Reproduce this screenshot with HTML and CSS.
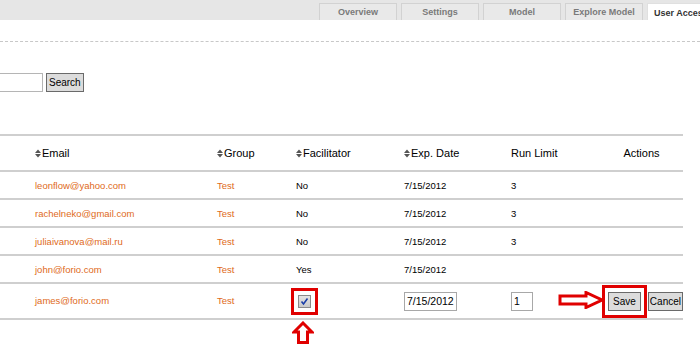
FILE: index.html
```html
<!DOCTYPE html>
<html lang="en">
<head>
    <meta charset="UTF-8">
    <title>User Access</title>
    <link rel="stylesheet" href="styles.css">
</head>
<body>
    <div class="topbar">
        <ul class="tabs">
            <li>Overview</li>
            <li>Settings</li>
            <li>Model</li>
            <li>Explore Model</li>
            <li class="active">User Access</li>
        </ul>
    </div>
    <div class="subhead"></div>

    <div class="search">
        <input type="text" class="search-input">
        <button class="btn">Search</button>
    </div>

    <table class="users">
        <colgroup>
            <col class="c-name">
            <col class="c-email">
            <col class="c-group">
            <col class="c-fac">
            <col class="c-date">
            <col class="c-limit">
            <col class="c-actions">
        </colgroup>
        <tr>
            <th></th>
            <th><svg class="sort" width="6" height="9" viewBox="0 0 6 9"><polygon points="0,4 3,0.5 6,4"/><polygon points="0,5 3,8.5 6,5"/></svg>Email</th>
            <th><svg class="sort" width="6" height="9" viewBox="0 0 6 9"><polygon points="0,4 3,0.5 6,4"/><polygon points="0,5 3,8.5 6,5"/></svg>Group</th>
            <th><svg class="sort" width="6" height="9" viewBox="0 0 6 9"><polygon points="0,4 3,0.5 6,4"/><polygon points="0,5 3,8.5 6,5"/></svg>Facilitator</th>
            <th><svg class="sort" width="6" height="9" viewBox="0 0 6 9"><polygon points="0,4 3,0.5 6,4"/><polygon points="0,5 3,8.5 6,5"/></svg>Exp. Date</th>
            <th>Run Limit</th>
            <th class="actions-head">Actions</th>
        </tr>
        <tr>
            <td></td>
            <td class="link">leonflow@yahoo.com</td>
            <td class="link">Test</td>
            <td>No</td>
            <td>7/15/2012</td>
            <td>3</td>
            <td></td>
        </tr>
        <tr>
            <td></td>
            <td class="link">rachelneko@gmail.com</td>
            <td class="link">Test</td>
            <td>No</td>
            <td>7/15/2012</td>
            <td>3</td>
            <td></td>
        </tr>
        <tr>
            <td></td>
            <td class="link">juliaivanova@mail.ru</td>
            <td class="link">Test</td>
            <td>No</td>
            <td>7/15/2012</td>
            <td>3</td>
            <td></td>
        </tr>
        <tr>
            <td></td>
            <td class="link">john@forio.com</td>
            <td class="link">Test</td>
            <td>Yes</td>
            <td>7/15/2012</td>
            <td></td>
            <td></td>
        </tr>
        <tr class="editing">
            <td></td>
            <td class="link">james@forio.com</td>
            <td class="link">Test</td>
            <td>
                <span class="marked check-mark">
                    <span class="checkbox"><svg width="9" height="9" viewBox="0 0 9 9"><path d="M1.5 4.5 L3.5 7 L7.5 1.5" fill="none" stroke="#1b3fa8" stroke-width="1.6"/></svg></span>
                </span>
            </td>
            <td><input type="text" class="field date-field" value="7/15/2012"></td>
            <td><input type="text" class="field limit-field" value="1"></td>
            <td class="actions">
                <span class="save-wrap">
                    <svg class="arrow-right" width="46" height="18" viewBox="0 0 46 18"><polygon points="2,5 28,5 28,1.5 44,9 28,16.5 28,13 2,13" fill="#fff" stroke="#e00000" stroke-width="3" stroke-linejoin="miter"/></svg>
                    <span class="marked save-mark"><button class="btn">Save</button></span>
                </span><button class="btn btn-cancel">Cancel</button>
            </td>
        </tr>
    </table>

    <div class="annot-up">
        <svg width="22" height="23" viewBox="0 0 22 23"><polygon points="11,2 20,11 15.5,11 15.5,21.5 6.5,21.5 6.5,11 2,11" fill="#fff" stroke="#e00000" stroke-width="3" stroke-linejoin="miter"/></svg>
    </div>
</body>
</html>
```

FILE: styles.css
```css
body {
    margin: 0;
    font-family: "Liberation Sans", Arial, sans-serif;
    background: #fff;
    color: #000;
    overflow: hidden;
}
.topbar {
    height: 20px;
    background-color: #e6e6e6;
    overflow: hidden;
}
.tabs {
    list-style: none;
    margin: 0;
    padding: 3px 0 0 319px;
    display: flex;
    gap: 4px;
}
.tabs li {
    flex-shrink: 0;
    width: 78px;
    height: 17px;
    line-height: 16px;
    text-align: center;
    font-size: 9px;
    font-weight: bold;
    color: #7a7a7a;
    background-color: #e9e9e9;
    border: 1px solid #d2d2d2;
    border-bottom: none;
    box-sizing: border-box;
}
.tabs li.active {
    width: 80px;
    background-color: #fff;
    color: #333;
    border-color: #e0e0e0;
    line-height: 18px;
    text-align: left;
    padding-left: 6px;
    white-space: nowrap;
}
.subhead {
    height: 21px;
    border-bottom: 1px dashed #c8c8c8;
}
.search {
    display: flex;
    align-items: center;
    gap: 3px;
    margin: 31px 0 0 -60px;
}
.search-input {
    width: 103px;
    height: 19px;
    box-sizing: border-box;
    border: 1px solid #b5b5b5;
    padding: 0;
}
.btn {
    font-family: "Liberation Sans", Arial, sans-serif;
    font-size: 10px;
    color: #000;
    background-color: #dcdcdc;
    border: 1px solid #6a6a6a;
    height: 19px;
    padding: 0 2px;
    margin: 0;
    border-radius: 0;
}
.users {
    margin-top: 42px;
    width: 683px;
    table-layout: fixed;
    border-collapse: collapse;
    font-size: 9.5px;
}
.c-name { width: 35px; }
.c-email { width: 182px; }
.c-group { width: 79px; }
.c-fac { width: 108px; }
.c-date { width: 107px; }
.c-limit { width: 89px; }
.c-actions { width: 83px; }
.users tr {
    border-top: 2px solid #cfcfcf;
    border-bottom: 2px solid #cfcfcf;
}
.users th {
    height: 34px;
    padding: 0;
    font-size: 11px;
    font-weight: normal;
    text-align: left;
    white-space: nowrap;
}
.users th.actions-head {
    text-align: center;
}
.sort {
    fill: #555;
    margin-right: 1px;
    vertical-align: -1px;
}
.users td {
    height: 25px;
    padding: 1px 0 0 0;
    line-height: 12px;
    white-space: nowrap;
    vertical-align: middle;
}
.users td.link {
    color: #e06a1a;
}
.users tr.editing td {
    height: 34px;
    padding: 0;
}
.marked {
    display: inline-block;
    border: 3px solid #e00000;
    vertical-align: middle;
}
.check-mark {
    padding: 4px;
    margin-left: -5px;
}
.checkbox {
    display: block;
    width: 11px;
    height: 11px;
    border: 1px solid #8a8a8a;
    background: linear-gradient(#e4e4e4, #c9c9c9);
    position: relative;
}
.checkbox svg {
    position: absolute;
    left: 1px;
    top: 1px;
}
.field {
    font-family: "Liberation Sans", Arial, sans-serif;
    font-size: 10.5px;
    height: 19px;
    box-sizing: border-box;
    border: 1px solid #a8a8a8;
    padding: 0 2px;
    margin: 0;
    vertical-align: middle;
}
.date-field {
    width: 53px;
}
.limit-field {
    width: 22px;
}
.users td.actions {
    text-align: right;
}
.save-wrap {
    position: relative;
    display: inline-block;
    vertical-align: middle;
}
.save-mark {
    padding: 4px 3px;
    margin-right: 1px;
    vertical-align: top;
}
.save-mark .btn {
    display: block;
    padding: 0 4px;
}
.arrow-right {
    position: absolute;
    left: -44px;
    top: 6px;
}
.actions > .btn {
    vertical-align: middle;
}
.btn-cancel {
    padding: 0 1px;
}
.annot-up {
    padding: 1px 0 0 292px;
    line-height: 0;
}
```
